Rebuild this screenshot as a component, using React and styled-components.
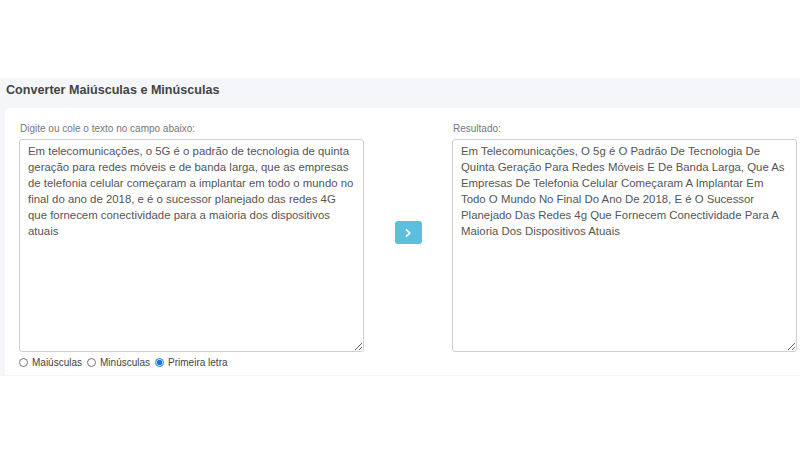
import React, { useState } from "react";
import styled, { createGlobalStyle } from "styled-components";

const GlobalStyle = createGlobalStyle`
    body {
        margin: 0;
        background: #ffffff;
        font-family: "Liberation Sans", Arial, sans-serif;
    }
`;

const Page = styled.div`
    padding-top: 78px;
`;

const Section = styled.section`
    background: #f4f6f9;
    padding-bottom: 1px;
`;

const Title = styled.h1`
    margin: 0;
    height: 30px;
    box-sizing: border-box;
    padding: 5px 6px 0;
    line-height: 15px;
    font-size: 12.6px;
    font-weight: bold;
    color: #444;
`;

const Card = styled.div`
    margin-left: 5px;
    background: #ffffff;
    border-top-left-radius: 4px;
    padding: 15px 0 7px 14px;
`;

const Columns = styled.div`
    display: grid;
    grid-template-columns: 345px 88px 345px;
    align-items: start;
`;

const Field = styled.div`
    display: flex;
    flex-direction: column;
`;

const Label = styled.label`
    font-size: 10px;
    color: #777;
    margin-bottom: 5px;
    padding-left: 1px;
`;

const TextArea = styled.textarea`
    box-sizing: border-box;
    width: 100%;
    height: 213px;
    padding: 3px 7px 4px 8px;
    border: 1px solid #cfcfcf;
    border-radius: 3px;
    font-family: "Liberation Sans", Arial, sans-serif;
    font-size: 11.4px;
    line-height: 16px;
    color: #555;
    resize: vertical;
    outline: none;
`;

const Middle = styled.div`
    display: flex;
    justify-content: center;
    padding-top: 98px;
`;

const GoButton = styled.button`
    width: 27px;
    height: 23px;
    border: none;
    border-radius: 3px;
    background: #5bc0de;
    display: flex;
    align-items: center;
    justify-content: center;
    padding: 0;
    cursor: pointer;
`;

const Options = styled.div`
    display: flex;
    align-items: center;
    gap: 5px;
    margin-top: 5px;
    font-size: 10px;
    color: #444;
`;

const Option = styled.label`
    display: flex;
    align-items: center;
    gap: 4px;
`;

const Radio = styled.input`
    width: 9px;
    height: 9px;
    margin: 0;
    accent-color: #1a73e8;
`;

const Arrow = () => (
    <svg width="10" height="10" viewBox="0 0 10 10" fill="none">
        <path d="M3.5 1.8L6.8 5L3.5 8.2" stroke="white" strokeWidth="1.8" strokeLinecap="round" strokeLinejoin="round"/>
    </svg>
);

const source = "Em telecomunicações, o 5G é o padrão de tecnologia de quinta geração para redes móveis e de banda larga, que as empresas de telefonia celular começaram a implantar em todo o mundo no final do ano de 2018, e é o sucessor planejado das redes 4G que fornecem conectividade para a maioria dos dispositivos atuais";

// primeira letra de cada palavra em maiúscula (o "é" fica minúsculo, como no site)
const capitalize = (text) =>
    text.toLowerCase().replace(/(^|\s)([a-z0-9])/g, (m, s, c) => s + c.toUpperCase());

export default function App() {
    const [mode, setMode] = useState("primeira");
    const result = capitalize(source);

    return (
        <Page>
            <GlobalStyle />
            <Section>
                <Title>Converter Maiúsculas e Minúsculas</Title>
                <Card>
                    <Columns>
                        <Field>
                            <Label>Digite ou cole o texto no campo abaixo:</Label>
                            <TextArea defaultValue={source} />
                            <Options>
                                <Option>
                                    <Radio type="radio" name="modo" checked={mode === "mai"} onChange={() => setMode("mai")} />
                                    Maiúsculas
                                </Option>
                                <Option>
                                    <Radio type="radio" name="modo" checked={mode === "min"} onChange={() => setMode("min")} />
                                    Minúsculas
                                </Option>
                                <Option>
                                    <Radio type="radio" name="modo" checked={mode === "primeira"} onChange={() => setMode("primeira")} />
                                    Primeira letra
                                </Option>
                            </Options>
                        </Field>
                        <Middle>
                            <GoButton><Arrow /></GoButton>
                        </Middle>
                        <Field>
                            <Label>Resultado:</Label>
                            <TextArea readOnly value={result} />
                        </Field>
                    </Columns>
                </Card>
            </Section>
        </Page>
    );
}
